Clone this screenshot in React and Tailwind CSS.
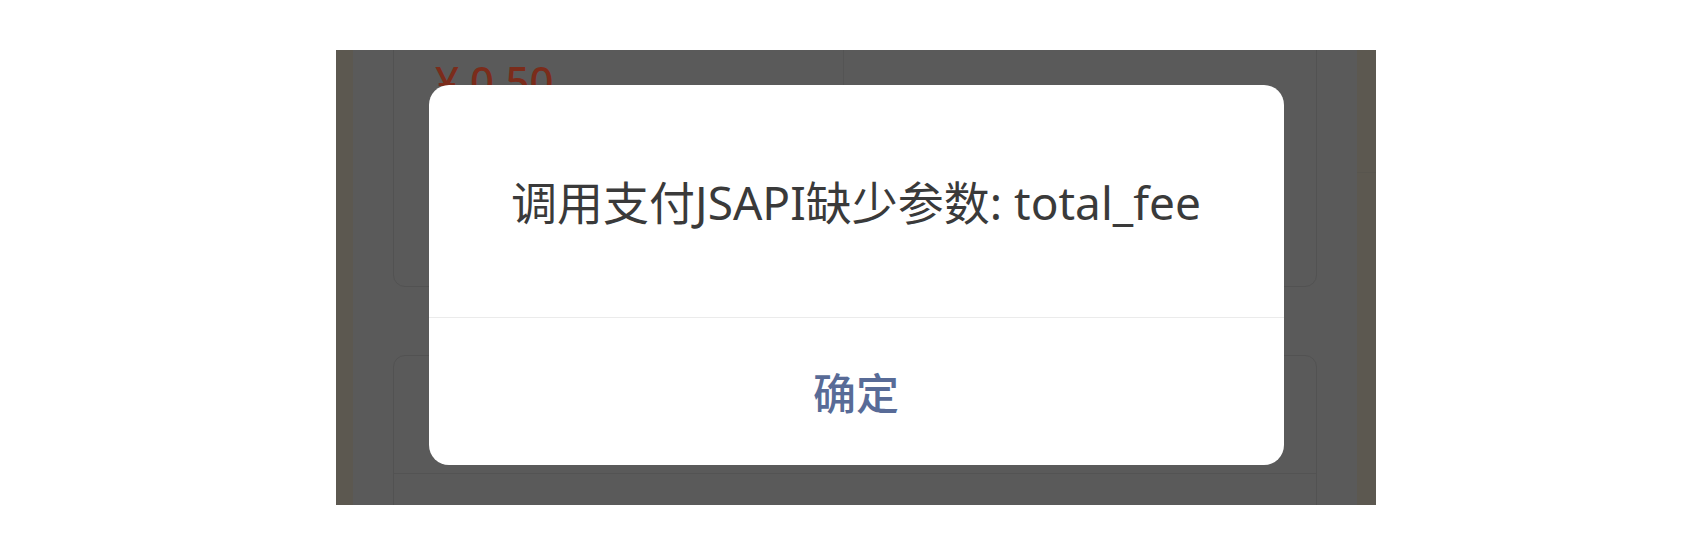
import React from "react";

const font = { fontFamily: '"Noto Sans", "Noto Sans CJK SC", sans-serif' };

// dimmed page behind the alert
const Backdrop = () => (
  <div className="flex h-full">
    <div className="w-[17px] bg-[#5c5850]" />
    <div className="flex-1 bg-[#5a5a5a] px-[40px] overflow-hidden">
      {/* order card (cut off at top) */}
      <div className="-mt-[20px] h-[257px] rounded-[12px] border border-[#525252] flex">
        <div className="w-[450px] border-r border-[#545454] pl-[41px] pt-[29px]">
          <p className="text-[42px] font-medium leading-none text-[#7b2c1b]" style={font}>
            ¥ 0.50
          </p>
        </div>
        <div className="flex-1" />
      </div>
      {/* second card */}
      <div className="mt-[68px] h-[200px] rounded-t-[12px] border border-[#525252]">
        <div className="h-[118px] border-b border-[#535353]" />
      </div>
    </div>
    <div className="w-[19px] bg-[#5c5850] flex flex-col">
      <div className="h-[123px] border-b border-[#58554e]" />
    </div>
  </div>
);

export default function App() {
  return (
    <div className="w-[1692px] h-[548px] bg-white pt-[50px]" style={font}>
      <div className="relative ml-[336px] w-[1040px] h-[455px] overflow-hidden">
        <Backdrop />

        {/* alert dialog */}
        <div className="absolute inset-0 flex justify-center items-start pt-[35px]">
          <div className="w-[855px] h-[380px] bg-white rounded-[20px] flex flex-col">
            <div className="h-[232px] flex items-center justify-center pt-[2px]">
              <p className="text-[46px] text-[#3a3a3a] leading-none">
                调用支付JSAPI缺少参数: total_fee
              </p>
            </div>
            <div className="h-px bg-[#ebebeb]" />
            <button className="flex-1 flex items-center justify-center text-[43px] font-medium text-[#586b97] leading-none pt-[4px]">
              确定
            </button>
          </div>
        </div>
      </div>
    </div>
  );
}
